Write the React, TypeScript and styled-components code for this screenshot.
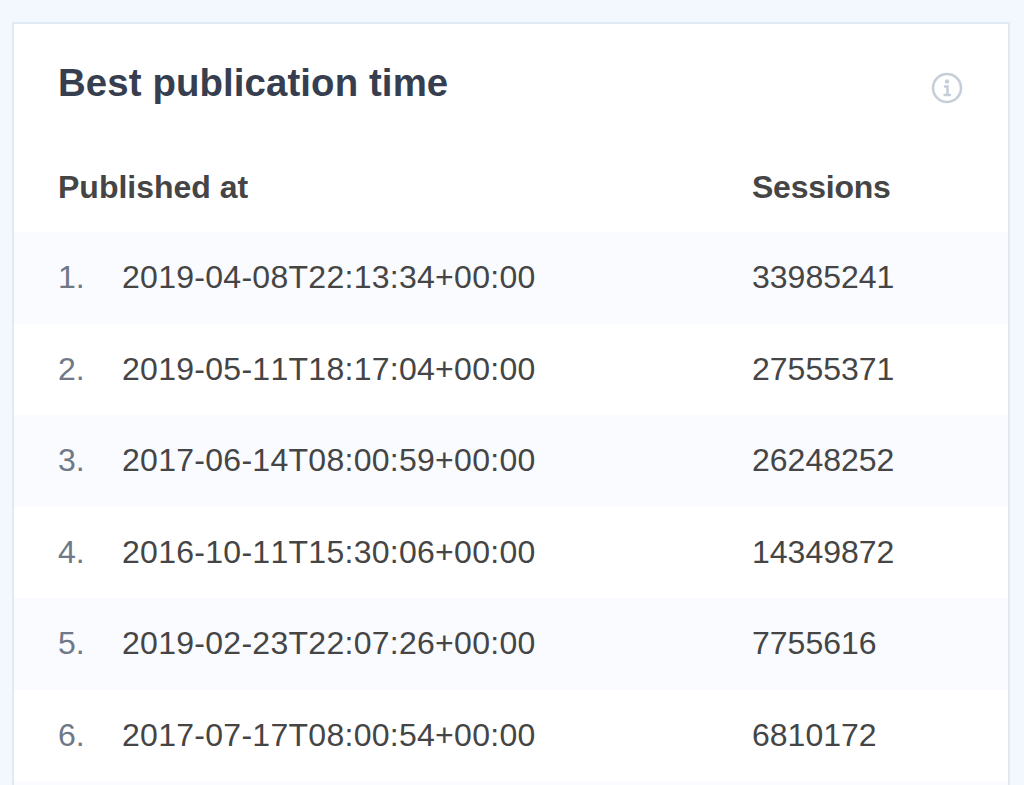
import React from "react";
import styled, { createGlobalStyle } from "styled-components";

const Global = createGlobalStyle`
  html, body { margin: 0; padding: 0; height: 100%; overflow: hidden; background: #f3f7fe; }
  body { font-family: "Liberation Sans", Arial, sans-serif; }
`;

const Page = styled.div`
  height: 785px;
  overflow: hidden;
  padding: 22px 14px 0 12px;
  box-sizing: border-box;
`;

const Card = styled.section`
  background: #ffffff;
  border: 2px solid #e1e9f4;
  border-bottom: none;
  box-sizing: border-box;
  height: 790px;
`;

const Header = styled.header`
  display: flex;
  justify-content: space-between;
  align-items: flex-start;
  padding: 37px 45px 0 44px;
  height: 80px;
  box-sizing: border-box;
`;

const Title = styled.h2`
  margin: 0;
  font-size: 38.4px;
  line-height: 44px;
  font-weight: 700;
  letter-spacing: 0.1px;
  color: #363e4f;
`;

const InfoIcon = styled.svg`
  width: 32px;
  height: 32px;
  margin-top: 11px;
  color: #c6ced9;
`;

const HeadRow = styled.div`
  display: grid;
  grid-template-columns: 694px 1fr;
  align-items: center;
  height: 128px;
  padding: 38px 0 0 44px;
  box-sizing: border-box;
  font-size: 32px;
  font-weight: 700;
  color: #454545;
`;

const SessionsHead = styled.span`
  letter-spacing: -0.25px;
`;

const Rows = styled.ol`
  list-style: none;
  margin: 0;
  padding: 0;
`;

const Row = styled.li<{ $striped: boolean }>`
  display: grid;
  grid-template-columns: 64px 630px 1fr;
  align-items: center;
  height: 91.5px;
  padding-left: 44px;
  box-sizing: border-box;
  font-size: 32px;
  font-kerning: none;
  color: #454545;
  background: ${(p) => (p.$striped ? "#f9fbff" : "#ffffff")};
`;

const Rank = styled.span`
  color: #6f7886;
`;

const DateCell = styled.span`
  letter-spacing: 0.28px;
`;

const Sessions = styled.span``;

const data: [string, string][] = [
  ["2019-04-08T22:13:34+00:00", "33985241"],
  ["2019-05-11T18:17:04+00:00", "27555371"],
  ["2017-06-14T08:00:59+00:00", "26248252"],
  ["2016-10-11T15:30:06+00:00", "14349872"],
  ["2019-02-23T22:07:26+00:00", "7755616"],
  ["2017-07-17T08:00:54+00:00", "6810172"],
  ["", ""],
];

export default function App() {
  return (
    <Page>
      <Global />
      <Card>
        <Header>
          <Title>Best publication time</Title>
          <InfoIcon viewBox="0 0 32 32" fill="none" stroke="currentColor" aria-hidden>
            <circle cx="16" cy="16" r="14" strokeWidth="2.6" />
            <circle cx="16" cy="9.5" r="2.2" fill="currentColor" stroke="none" />
            <path d="M13 14.5h3.5v8M12.5 23h7.5" strokeWidth="2.6" />
          </InfoIcon>
        </Header>
        <HeadRow>
          <span>Published at</span>
          <SessionsHead>Sessions</SessionsHead>
        </HeadRow>
        <Rows>
          {data.map(([date, sessions], i) => (
            <Row key={i} $striped={i % 2 === 0}>
              <Rank>{date ? `${i + 1}.` : ""}</Rank>
              <DateCell>{date}</DateCell>
              <Sessions>{sessions}</Sessions>
            </Row>
          ))}
        </Rows>
      </Card>
    </Page>
  );
}
